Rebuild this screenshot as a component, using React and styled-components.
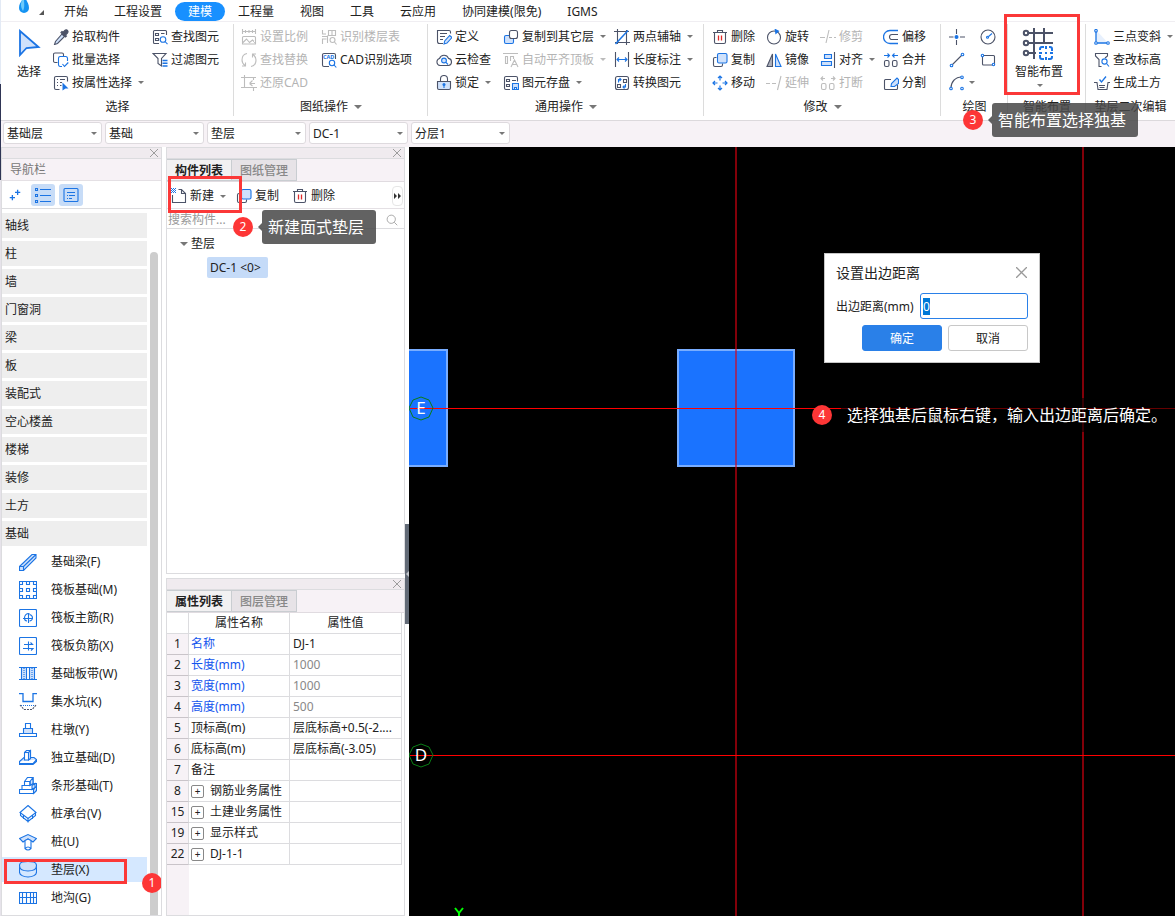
import React, { useEffect, useRef, useState } from 'react'
import styled, { createGlobalStyle } from 'styled-components'

const GlobalStyle = createGlobalStyle`
*{
    box-sizing:border-box;
}
body{
    margin:0;
    font-family:"Noto Sans","Noto Sans CJK SC",sans-serif;
    font-size:12px;
    line-height:16px;
    color:#222;
}
button,input,select{
    font:inherit;
    color:inherit;
    margin:0;
    padding:0;
    border:0;
    background:none;
}
`

/* ---------- icons ---------- */
const Svg = styled.svg`
flex:none;
display:block;
width:${({ $size }) => $size}px;
height:${({ $size }) => $size}px;
fill:none;
stroke:${({ $disabled }) => ($disabled ? '#bdbdbd' : '#4c5368')};
stroke-width:1.1;
.a{
    stroke:${({ $disabled }) => ($disabled ? '#bdbdbd' : '#1b74e4')};
}
.t{
    fill:${({ $disabled }) => ($disabled ? '#f4f4f4' : '#cfe1fb')};
}
.f{
    fill:${({ $disabled }) => ($disabled ? '#bdbdbd' : '#1b74e4')};
    stroke:none;
}
.w{
    fill:#fff;
}
.r{
    stroke:#e02a2a;
}
.d{
    fill:#4c5368;
}
`

const icons = {
    picker: <><path className="t" d="M9 5l2.500 2.500-7 7L1.500 15.500l1-3z" /><path className="d" d="M8 3.500l4.500 4.500 1-1-1-1 2-2c1-1 .5-2.500-.5-3s-1.500-.3-2.200.4l-1.800 1.900-1-.8z" /></>,
    batch: <><path d="M4.500 10.500H2A1.500 1.500 0 0 1 .5 9V2.500A1.500 1.500 0 0 1 2 1h7a1.500 1.500 0 0 1 1.500 1.500V4" /><path className="a w" d="M9 14.500H7A1.800 1.800 0 0 1 5.500 12.700V6.500A1.800 1.800 0 0 1 7 4.500h6a1.800 1.800 0 0 1 1.500 1.800V9" /><path className="a" d="M9.500 12l2 2.500 3.800-4" /></>,
    attrs: <><path d="M6.500 14.500H3a1.500 1.500 0 0 1-1.500-1.500V3A1.500 1.500 0 0 1 3 1.500h10A1.500 1.500 0 0 1 14.500 3v3.500M4 4.500h1M7 4.500h5M4 7.500h1M7 7.500h2M4 10.500h1M7 10.500h1.500" /><path className="f" d="M9.500 7.500l6 6h-3l-3 2z" /></>,
    find: <><path d="M7 14.500H2.500A1 1 0 0 1 1.500 13.500v-11A1 1 0 0 1 2.500 1.500h11a1 1 0 0 1 1 1V6M3.500 4.500h3v2h-3zM3.500 9.500h3v2h-3zM9 4.500h3.500" /><circle className="a" cx="11" cy="10.500" r="2.800" /><path className="a" d="M13 12.500l2.500 2.700" /></>,
    filter: <><path d="M1 1.500h13L9.500 6.500V14L6 11.500v-5z" /><path className="a" strokeWidth="1.500" d="M10.500 8.500h5M10.500 11.200h5M10.500 14h5" /></>,
    scale: <path d="M1.500 2.500h13M1.500 0v5M14.500 0v5M4.500 1v3M8 1v3M11.500 1v3M1.500 15V8.500q0-1 1-1h11q1 0 1 1V15zM2 13.500L5.500 10l3 3.500 3-2.500 3 3" />,
    replace: <path d="M6 1.500C3 2 1 4.500 1 8c0 2.500 1 4 3 5.500M4.500 10.500v3.500H1M10 14.500c3-.5 5-3 5-6.500 0-2.500-1-4-3-5.500M11.500 5.500V2H15" />,
    restore: <path d="M3.500 0v12.500H16M0 2.500h15M12.500 2.500V5M12.500 12.500V16M0 12.500h4M9 8.500h5M8.500 8.500l3-3M8.500 8.500l3 2.500" />,
    floors: <><path d="M1.500 1v4H5M7.500 1.500h7v5h-7zM11 1.500v5M1.500 15v-5h4M6.500 6.500V14M1 7.500h5" /><circle cx="11.500" cy="11" r="2.500" /><path d="M13.500 13l2 2.500" /></>,
    cad: <><path d="M14.500 7V3A1.500 1.500 0 0 0 13 1.500H3A1.500 1.500 0 0 0 1.500 3v10A1.500 1.500 0 0 0 3 14.500h5" /><circle className="a w" cx="11" cy="11" r="2.700" /><path className="a" d="M13 13l2.300 2.500" /></>,
    define: <><path d="M7 14.500H3.500a2 2 0 0 1-2-2v-11H13A1.500 1.500 0 0 1 14.500 3v1.500M4 4.500h7M4 7.500h5M4 10.500h3" /><path className="a t" d="M8 15l.7-3 5-5.500L16 8.500l-5 5.500z" /></>,
    cloud: <><path d="M4 13.500A3.600 3.600 0 0 1 3.500 6.500a4.800 4.800 0 0 1 9-.1A3.600 3.600 0 0 1 12.500 13.500z" /><circle className="a t" cx="8" cy="8.500" r="2.400" /><path className="a" d="M9.700 10.200l2.300 2.300" /></>,
    lock: <><path className="t" d="M1.500 6.500h13v6.500a1.500 1.500 0 0 1-1.500 1.500H3A1.500 1.500 0 0 1 1.500 13z" /><path d="M4.500 6.500V4a3.500 3.500 0 0 1 7 0v2.500" /><circle className="f" cx="8" cy="9.500" r="1.500" /><path className="a" d="M8 10v3" /></>,
    copyTo: <><rect className="t a" x="1.500" y="6.500" width="9" height="8" rx="1.500" /><rect className="w" x="6.500" y="1.500" width="8" height="8" rx="2" /></>,
    alignTop: <path d="M0 1.500h15M2.500 4.500h2v7h-2zM7.500 9V4.500h3V7M8 15l3.500-7 3.500 7M9.300 12.500h4.500" />,
    save: <><path d="M7 14.500H3A1.500 1.500 0 0 1 1.500 13V3A1.500 1.500 0 0 1 3 1.500h10A1.500 1.500 0 0 1 14.500 3v3.500M3.500 4.500h3v2h-3zM3.500 9.500h3v2h-3zM9 5.500h4" /><path className="a t" d="M9.500 8.500h6v6h-6z" /><path className="a w" d="M11.500 12.500h2v2h-2z" /></>,
    axis: <><path d="M3.500 0v15M12.500 1v15M0 2.500h15M1 13.500h15" /><path className="a" strokeWidth="1.500" d="M1.500 15L14 1.500" /></>,
    length: <><path d="M1.500 0v15M14.500 0v15" /><path className="a" d="M3 7.500h10M5 5.500L3 7.500l2 2M11 5.500l2 2-2 2" /></>,
    convert: <><rect x="1.500" y="1.500" width="13" height="13" rx="2" /><path d="M9.500 4.500h3v3h-3zM3.500 9.500h3v3h-3z" /><path className="a" d="M4.500 7.500v-3h2M5.500 3l1.500 1.500L5.500 6M11.500 9v3h-2M10.500 13.500L9 12l1.500-1.500" /></>,
    trash: <><path d="M1 3.500h14M5.500 3V1.500h5V3M2.500 3.500v9.500A1.500 1.500 0 0 0 4 14.500h8a1.500 1.500 0 0 0 1.500-1.500V3.500" /><path className="r" strokeWidth="1.300" d="M6.500 6.500v5M9.500 6.500v5" /></>,
    copy: <><path d="M4 14.500H3A1.500 1.500 0 0 1 1.500 13V7A1.500 1.500 0 0 1 3 5.500h1.500M10.500 11.500V13A1.500 1.500 0 0 1 9 14.500H4" /><rect className="t a" x="5.500" y="1.500" width="9.500" height="9.500" rx="1.500" /></>,
    move: <path className="a" strokeWidth="1.200" d="M8 1v4.500M8 10.500V15M1 8h4.500M10.500 8H15M6 3l2-2 2 2M6 13l2 2 2-2M3 6L1 8l2 2M13 6l2 2-2 2" />,
    rotate: <><circle cx="8" cy="8.500" r="6.500" /><path className="f" d="M8.500 -.5l5 2.500-4 3.500z" /></>,
    mirror: <><path d="M6.500 2v12.500H1z" fill="#aeb2bc" /><path className="a t" d="M9.500 2v12.500H15z" /></>,
    extend: <path d="M0 8.500h4M6 8.500h4M15 1l-3.500 14" />,
    trim: <path d="M0 8.500h5M9 1L6 14M9 8.500h3M14 8.500h2" />,
    align: <><path d="M14.500 0v16" /><path className="a t" d="M4.500 2.500h7v4h-7zM1.500 9.500h10v4h-10z" /></>,
    offset: <><path d="M15 5.500H9a2.500 2.500 0 0 0 0 5h6" /><path className="a" strokeWidth="1.300" d="M15 1.500H7a6.500 6.500 0 0 0 0 13h8" /></>,
    merge: <><rect x="1.500" y="8.500" width="4.500" height="6" rx="1.500" /><rect x="9.500" y="8.500" width="4.500" height="6" rx="1.500" /><path className="a" d="M1 3.500h5M4.500 1.500l2 2-2 2M15 3.500h-5M11.500 1.500l-2 2 2 2" /></>,
    brk: <><rect x="1.500" y="8.500" width="4.500" height="6" rx="1.500" /><rect x="9.500" y="8.500" width="4.500" height="6" rx="1.500" /><path d="M1 3.500h4M3 1.500l-2 2 2 2M15 3.500h-4M13 1.500l2 2-2 2" /></>,
    split: <><path d="M8 4.500H2.500a1 1 0 0 0-1 1v8a1 1 0 0 0 1 1h11a1 1 0 0 0 1-1V10" /><path className="a t" d="M8 11.500l.5-3L14 3l1.500 1.500v4l-4 3z" /></>,
    point: <><path d="M7.500 0v5M7.500 11v5M0 8h4.500M11 8h5" /><circle className="f" cx="7.500" cy="8" r="2" /></>,
    circle: <><circle cx="8" cy="8" r="7" /><path className="a" d="M8 8l4-3.500" /><circle className="a w" cx="7.500" cy="8.300" r="1" /></>,
    line: <><path d="M2.500 13.500l11-11" /><circle className="a w" cx="2.500" cy="13.500" r="1.300" /><circle className="a w" cx="13.500" cy="2.500" r="1.300" /></>,
    rect: <><rect x="2.500" y="3.500" width="12" height="9.500" rx="1" /><circle className="a w" cx="2.500" cy="3.500" r="1.200" /><circle className="a w" cx="13.500" cy="12.500" r="1.200" /></>,
    arc: <><path d="M2 13c0-6 4-11 11-11" /><circle className="a w" cx="2" cy="13.500" r="1.300" /><circle className="a w" cx="13" cy="2.300" r="1.300" /><circle className="a w" cx="13" cy="13.500" r="1.300" /></>,
    slope: <><path className="t" stroke="none" d="M2 1l12 13H2z" fillOpacity=".5" /><path className="a" d="M2 2v12h12" strokeWidth="1.300" /><circle className="a w" cx="2" cy="1.800" r="1.300" /><circle className="a w" cx="2" cy="14" r="1.300" /><circle className="a w" cx="14" cy="14" r="1.300" /></>,
    elev: <><path d="M7.500 14.500H5V7.500L1.500 4V1.500h12V4L11 6" /><circle className="a w" cx="10.500" cy="9.500" r="2.600" /><path className="a" d="M12.500 11.500l2.500 3" /></>,
    earth: <><path d="M0 7.500h3l1 7h9l1-7h2M5 10.500h6M5.500 12.500h5" /><path className="a" strokeWidth="1.300" d="M5.500 4.500l2 2.500L12 1.500" /></>,
    fresh: <><path d="M1.500 7v7.500h13v-9l-4-4H7.500M10.500 1.500v4h4" /><path className="f" d="M0 0h1v1H0zM2 0h1v1H2zM4 0h1v1H4zM1 1h1v1H1zM3 1h1v1H3zM0 2h1v1H0zM2 2h1v1H2zM4 2h1v1H4zM1 3h1v1H1zM3 3h1v1H3zM0 4h1v1H0zM2 4h1v1H2zM4 4h1v1H4z" /></>,
    search: <><circle cx="7" cy="7" r="5.500" stroke="#999" /><path stroke="#999" d="M11 11l4 4" /></>,
    plus: <path className="a" strokeWidth="1.500" d="M11 2v6M8 5h6M5 8v6M2 11h6" />,
    list: <path className="a" d="M.5 1.500h2v2h-2zM.5 7.500h2v2h-2zM.5 13.500h2v2h-2zM5 2.500h11M5 8.500h11M5 14.500h11" />,
    card: <><rect className="a" x="1" y="1.500" width="14" height="13" rx="1" /><path className="a" d="M4 5.500h8M4 8.500h1M6 8.500h6M4 11.500h1M6 11.500h3" /></>,
    beam: <path className="a t" d="M.5 13.500L13 1.500h4V5L4.500 17.500h-4zM.5 13.500h4v4M4.500 13.500L17 1.500" />,
    raft: <path className="a" d="M.5.500h17v17H.5zM3.500.500v3h-3M7.500.500v3h3v-3M14.500.500v3h3M.5 7.500h3v3h-3M7.500 7.500h3v3h-3zM17.500 7.500h-3v3h3M.5 14.500h3v3M7.500 17.500v-3h3v3M14.500 17.500v-3h3" />,
    mainBar: <><rect className="a" x=".5" y=".5" width="17" height="17" rx="1" /><path className="a" d="M4 9.500h10M9.500 5v9M10.500 4.500c-3-.5-5 2-5 4.500s1 3 2.500 3M10.500 5.500c2 .5 3 2 3 3.500s-1.500 3-3 3" /></>,
    negBar: <><rect className="a" x=".5" y=".5" width="17" height="17" rx="1" /><path className="a" d="M5 7.500h8.500l-2-2M4 11.500h10l-2 2M9.500 4.500v9" /></>,
    strip: <><path className="t" stroke="none" d="M3 3h4v12H3zM11 3h4v12h-4z" /><path className="a" d="M0 2.500h18M0 14.500h18M2.500 3v11M7.500 3v11M10.500 3v11M15.500 3v11" /><path className="a" strokeDasharray="1 1" d="M5 3v11M13 3v11" /></>,
    pit: <><path className="a" strokeWidth="1.300" d="M0 .5h4v8h10v-8h4" /><path className="a" strokeDasharray="1 1" d="M2 12.500h14" /><path d="M1 12l4 4.500h8l4-4.500" strokeDasharray="2 1" /></>,
    pier: <><path className="a" d="M6.500 2.500h5v5h-5zM.5 12.500h17v3H.5z" /><path className="a t" d="M4.500 7.500h9v5h-9z" /></>,
    single: <><path className="a t" d="M.5 12.500L5 8.500h10l2.500 2-3.500 4H.5zM.5 12.500v3h13.500l3.500-3v-2M14 14.500v1" /><path className="a w" d="M5.500 3.500l2-2h4v8l-2 1.500h-4z" /><path className="a t" d="M9.500 3.500l2-2v8l-2 1.500z" /><path className="a" d="M5.500 3.500h4" /></>,
    stripBase: <><path className="a w" d="M5.500 4.500l3-4h5.500v6h3.500v7l-3 3H.5v-4h2.500v-4h2.500z" /><path className="a t" d="M11 4.500l3-4v6l-3 2zM13 8.500l3-2v4l-3 2zM14.500 12.500l3-3v4l-3 3z" /><path className="a" d="M5.500 4.500H11v4H3M3 12.500h11.500" /></>,
    cap: <><path className="a w" d="M9 .5l8 7-8 6-8-6z" /><path className="a" d="M1.500 7.500v3l7.500 6 7.500-6v-3M9 13.500v4M4.500 10v4M13.500 10v4" /></>,
    pile: <><path className="a t" d="M.5 5.500l8.500-4 8.500 4-3.500 3.500L9 6 4 9z" /><path className="a w" d="M6 7.500v8q3 3 6 0v-8L9 6zM6 15.500q3-3 6 0" /></>,
    cushion: <><path className="a" d="M.5 5.500v5.500c0 3 4 5 8.500 5s8.500-2 8.500-5V5.500" /><path className="a t" d="M.5 4.500c0 4 4 5.500 8.500 5.500s8.500-1.500 8.500-5.500S13 .5 9 .5.5.5.5 4.500z" /></>,
    trench: <path className="a" d="M.5 3.500h17v11H.5zM.5 8.500h17M3.500 4v10M7.500 4v10M11.500 4v10M14.500 4v10" />,
}

const Icon = ({ name, size = 16, disabled }) => (
    <Svg $size={size} $disabled={disabled} viewBox={size === 18 ? '0 0 18 18' : '0 0 16 16'} aria-hidden="true">
        {icons[name]}
        {name === 'cad' && <text x="2" y="6.500" fontSize="5.500" fontWeight="700" fill="#1b74e4" stroke="none">CAD</text>}
    </Svg>
)

const Caret = styled.span`
flex:none;
width:0;
height:0;
border:${({ $big }) => ($big ? 4 : 3)}px solid transparent;
border-top-color:${({ $light }) => ($light ? '#bbb' : '#777')};
border-bottom:0;
margin-left:${({ $gap }) => $gap || 5}px;
`

const CloseIcon = ({ size = 8 }) => (
    <svg width={size} height={size} viewBox="0 0 10 10" stroke="#999" strokeWidth="1.200" aria-hidden="true">
        <path d="M0 0l10 10M10 0L0 10" />
    </svg>
)

/* ---------- shell ---------- */
const Shell = styled.div`
height:100vh;
display:flex;
flex-direction:column;
overflow:hidden;
padding-left:1px;
background:linear-gradient(#e3eaf5 0 84px,#2f3555 84px 180px,#e6e3ea 180px) 0 0/1px 100% no-repeat #fff;
`
const TabBar = styled.nav`
flex:none;
display:flex;
align-items:flex-end;
height:22px;
padding-left:16px;
border-bottom:1px solid #f0eef2;
background:#fff;
`
const Logo = styled.button`
display:flex;
align-items:flex-end;
width:34px;
height:22px;
gap:8px;
`
const Tab = styled.button`
height:19px;
padding:1px 13px 0;
border-radius:10px;
white-space:nowrap;
line-height:18px;
background:${({ $active }) => ($active ? '#1890ff' : 'transparent')};
color:${({ $active }) => ($active ? '#fff' : '#222')};
`
const Ribbon = styled.div`
flex:none;
display:flex;
height:98px;
background:#fff;
`
const Group = styled.section`
position:relative;
flex:${({ $width }) => ($width ? `0 0 ${$width}px` : '1 0 auto')};
display:flex;
flex-direction:column;
padding-top:3px;
&:not(:last-child)::after{
    content:"";
    position:absolute;
    right:0;
    top:2px;
    bottom:4px;
    width:1px;
    background:#dcdcdc;
}
`
const GroupBody = styled.div`
display:flex;
height:69px;
padding-left:${({ $pad }) => $pad || 0}px;
`
const GroupName = styled.div`
display:flex;
justify-content:center;
align-items:center;
height:26px;
white-space:nowrap;
`
const ToolGrid = styled.div`
display:grid;
grid-template-columns:${({ $cols }) => $cols};
grid-template-rows:repeat(3,23px);
grid-auto-flow:column;
`
const Tool = styled.button`
display:flex;
align-items:center;
gap:3px;
white-space:nowrap;
color:${({ disabled }) => (disabled ? '#b4b4b4' : '#222')};
`
const BigTool = styled.button`
display:flex;
flex-direction:column;
align-items:center;
width:${({ $width }) => $width}px;
padding:${({ $pad }) => $pad};
gap:${({ $gap }) => $gap}px;
`

/* ---------- selector bar ---------- */
const SelectorBar = styled.div`
flex:none;
display:flex;
gap:3px;
height:27px;
padding:1px 2px;
background:#f7f2f6;
border-top:1px solid #dcd9dc;
`
const SelectBox = styled.label`
position:relative;
width:99px;
height:22px;
select{
    width:100%;
    height:22px;
    padding:1px 3px 0;
    appearance:none;
    background:#fff;
    border:1px solid #dedade;
    border-radius:3px;
}
${Caret}{
    position:absolute;
    right:5px;
    top:10px;
    pointer-events:none;
}
`

/* ---------- side panels ---------- */
const Workspace = styled.main`
flex:1;
min-height:0;
display:flex;
`
const Panel = styled.section`
display:flex;
flex-direction:column;
min-height:0;
flex:${({ $basis }) => ($basis ? `0 0 ${$basis}px` : '1 1 0')};
border:1px solid #dcdcdf;
border-top:0;
background:#fff;
`
const PanelGrip = styled.div`
flex:none;
display:flex;
justify-content:flex-end;
height:12px;
padding-right:3px;
background:#f0ebef;
border-top:1px solid #dcdcdf;
border-bottom:1px solid #dcdcdf;
button{
    display:flex;
    align-items:center;
}
`
const NavTitle = styled.h2`
flex:none;
margin:0;
height:22px;
padding-left:8px;
font-size:12px;
font-weight:400;
line-height:22px;
color:#777;
background:#f7f2f6;
border-bottom:1px solid #e4e0e4;
`
const NavTools = styled.div`
flex:none;
display:flex;
align-items:center;
gap:4px;
height:28px;
padding-left:1px;
border-bottom:1px solid #dcdcdf;
`
const NavTool = styled.button`
display:flex;
align-items:center;
justify-content:center;
width:24px;
height:22px;
border-radius:3px;
background:${({ $on }) => ($on ? '#c7dcf7' : 'transparent')};
`
const NavBody = styled.div`
flex:1;
min-height:0;
display:flex;
gap:3px;
overflow:hidden;
padding:4px 3px 0 0;
`
const NavList = styled.ul`
flex:1;
margin:0;
padding:0;
list-style:none;
`
const NavRow = styled.li`
position:relative;
margin-bottom:3px;
button{
    display:flex;
    align-items:center;
    gap:14px;
    width:100%;
    height:25px;
    padding-left:${({ $child }) => ($child ? 17 : 3)}px;
    text-align:left;
    background:${({ $child, $on }) => ($on ? '#d5e8ff' : $child ? 'transparent' : '#eee')};
}
`
const Thumb = styled.div`
width:8px;
margin-top:39px;
border-radius:4px 4px 0 0;
background:#cdcdcd;
`
const Docks = styled.div`
flex:0 0 239px;
display:flex;
flex-direction:column;
gap:4px;
margin-left:4px;
`
const DockTabs = styled.div`
flex:none;
display:flex;
height:23px;
background:#f7f2f6;
border-bottom:1px solid #e0dbe0;
`
const DockTab = styled.button`
width:${({ $active }) => ($active ? 64 : 66)}px;
padding-top:2px;
border:1px solid #c9cdd1;
border-left-width:${({ $active }) => ($active ? 0 : 1)}px;
border-right-width:${({ $active }) => ($active ? 0 : 1)}px;
background:${({ $active }) => ($active ? '#f2f1f2' : '#e7e3e7')};
color:${({ $active }) => ($active ? '#222' : '#888')};
font-weight:${({ $active }) => ($active ? 700 : 500)};
`
const DockTools = styled.div`
flex:none;
display:flex;
align-items:center;
height:27px;
padding:2px 0 0 4px;
border-bottom:1px solid #e4e0e4;
`
const DockTool = styled(Tool)`
position:relative;
height:24px;
margin-right:${({ $space }) => $space || 0}px;
`
const MoreButton = styled.button`
width:11px;
height:20px;
margin:0 1px 0 auto;
border:1px solid #e6e6e6;
border-radius:4px;
display:flex;
align-items:center;
justify-content:center;
`
const SearchRow = styled.label`
flex:none;
display:flex;
align-items:center;
height:20px;
padding:2px 6px 0 1px;
border-bottom:1px solid #dcdcdf;
input{
    flex:1;
    min-width:0;
    outline:0;
}
input::placeholder{
    color:#999;
    opacity:1;
}
`
const Tree = styled.div`
flex:1;
padding:4px 0 0 12px;
`
const TreeNode = styled.button`
display:flex;
align-items:center;
gap:3px;
height:22px;
margin-bottom:2px;
`
const TreeLeaf = styled.button`
height:21px;
margin-left:28px;
padding:1px 7px 0 3px;
border-radius:2px;
background:#c5dbf8;
white-space:pre;
`
const PropsArea = styled.div`
flex:1;
overflow:hidden;
background:linear-gradient(#f7f2f6,#f7f2f6) 0 0/22px 100% no-repeat;
`
const PropsTable = styled.table`
width:calc(100% - 2px);
table-layout:fixed;
border-collapse:separate;
border-spacing:0;
background:#fff;
th,td{
    height:21px;
    padding:0 3px;
    border-right:1px solid #dcdcdf;
    border-bottom:1px solid #dcdcdf;
    font-weight:400;
    text-align:left;
    white-space:nowrap;
    overflow:hidden;
    text-overflow:ellipsis;
}
td:nth-child(2){
    padding:0 2px;
}
thead th{
    text-align:center;
}
tbody th{
    padding:0;
    text-align:center;
    background:#f7f2f6;
    border-bottom-color:#c9c4c9;
}
`
const Key = styled.span`
display:flex;
align-items:center;
gap:6px;
color:${({ $link }) => ($link ? '#1355ee' : '#222')};
`
const Value = styled.span`
color:${({ $muted }) => ($muted ? '#888' : '#222')};
`
const Expander = styled.button`
position:relative;
width:13px;
height:13px;
border:1px solid #888;
border-radius:2px;
font-size:10px;
line-height:10px;
`
const Splitter = styled.div`
flex:0 0 4px;
button{
    display:flex;
    align-items:center;
    width:4px;
    height:100px;
    margin-top:377px;
    background:#626a76;
}
`

/* ---------- drawing area ---------- */
const Canvas = styled.div`
position:relative;
flex:1;
min-width:0;
overflow:hidden;
background:#000;
&>svg{
    display:block;
    width:100%;
    height:100%;
}
`
const Dialog = styled.form`
position:absolute;
left:415px;
top:106px;
width:216px;
padding:9px 11px 11px;
background:#fff;
border:1px solid #c6c6c6;
header{
    display:flex;
    justify-content:space-between;
    align-items:center;
    height:20px;
    margin-bottom:10px;
    padding-right:1px;
    font-size:14px;
}
`
const Field = styled.label`
display:flex;
justify-content:space-between;
align-items:center;
white-space:nowrap;
span{
    padding-top:2px;
}
input{
    width:108px;
    height:26px;
    padding:0 2px;
    border:1px solid #2a80e8;
    border-radius:3px;
    outline:0;
}
input::selection{
    background:#0078d7;
    color:#fff;
}
`
const Actions = styled.div`
display:flex;
justify-content:flex-end;
gap:6px;
margin-top:6px;
`
const ActionButton = styled.button`
width:80px;
height:26px;
padding-top:1px;
border-radius:3px;
border:1px solid ${({ $primary }) => ($primary ? '#2a80e8' : '#c8c8c8')};
background:${({ $primary }) => ($primary ? '#2a80e8' : '#fff')};
color:${({ $primary }) => ($primary ? '#fff' : '#222')};
`

/* ---------- guide marks over the screen ---------- */
const Frame = styled.span`
position:absolute;
z-index:3;
top:${({ $top }) => $top}px;
left:${({ $left }) => $left}px;
width:${({ $w }) => $w}px;
height:${({ $h }) => $h}px;
border:3px solid #fb3838;
pointer-events:none;
`
const Step = styled.span`
position:absolute;
z-index:4;
top:${({ $top }) => $top}px;
left:${({ $left }) => $left}px;
display:flex;
align-items:center;
white-space:nowrap;
color:#fff;
b{
    width:20px;
    height:20px;
    border-radius:50%;
    background:#fd3636;
    font-weight:400;
    line-height:20px;
    text-align:center;
}
`
const Tip = styled.span`
position:relative;
margin-left:9px;
padding:1px 12px 0 6px;
border-radius:3px;
background:rgba(72,72,72,.86);
font-size:16px;
line-height:33px;
&::before{
    content:"";
    position:absolute;
    left:-4px;
    top:13px;
    border:4px solid transparent;
    border-left:0;
    border-right-color:rgba(72,72,72,.86);
}
`
const PlainTip = styled.span`
margin-left:9px;
padding:1px 20px 0 6px;
background:rgba(0,0,0,.6);
font-size:16px;
line-height:33px;
`

const menu = ['开始', '工程设置', '建模', '工程量', '视图', '工具', '云应用', '协同建模(限免)', 'IGMS']

// [icon, label, flags] - "v" adds a drop-down arrow, "x" disables
const selectTools = [['picker', '拾取构件'], ['batch', '批量选择'], ['attrs', '按属性选择', 'v'], ['find', '查找图元'], ['filter', '过滤图元']]
const sheetTools = [['scale', '设置比例', 'x'], ['replace', '查找替换', 'x'], ['restore', '还原CAD', 'x'], ['floors', '识别楼层表', 'x'], ['cad', 'CAD识别选项']]
const commonTools = [
    ['define', '定义'], ['cloud', '云检查'], ['lock', '锁定', 'v'],
    ['copyTo', '复制到其它层', 'v'], ['alignTop', '自动平齐顶板', 'vx'], ['save', '图元存盘', 'v'],
    ['axis', '两点辅轴', 'v'], ['length', '长度标注', 'v'], ['convert', '转换图元'],
]
const modifyTools = [
    ['trash', '删除'], ['copy', '复制'], ['move', '移动'],
    ['rotate', '旋转'], ['mirror', '镜像'], ['extend', '延伸', 'x'],
    ['trim', '修剪', 'x'], ['align', '对齐', 'v'], ['brk', '打断', 'x'],
    ['offset', '偏移'], ['merge', '合并'], ['split', '分割'],
]
const drawTools = [['point', '', '', '点'], ['line', '', '', '直线'], ['arc', '', 'v', '弧'], ['circle', '', '', '圆'], ['rect', '', '', '矩形']]
const cushionTools = [['slope', '三点变斜', 'v'], ['elev', '查改标高'], ['earth', '生成土方']]

const selectors = [['楼层', '基础层'], ['分类', '基础'], ['构件类型', '垫层'], ['构件', 'DC-1'], ['分层', '分层1']]
const categories = ['轴线', '柱', '墙', '门窗洞', '梁', '板', '装配式', '空心楼盖', '楼梯', '装修', '土方', '基础']
const foundations = [
    ['beam', '基础梁(F)'], ['raft', '筏板基础(M)'], ['mainBar', '筏板主筋(R)'], ['negBar', '筏板负筋(X)'],
    ['strip', '基础板带(W)'], ['pit', '集水坑(K)'], ['pier', '柱墩(Y)'], ['single', '独立基础(D)'],
    ['stripBase', '条形基础(T)'], ['cap', '桩承台(V)'], ['pile', '桩(U)'], ['cushion', '垫层(X)'], ['trench', '地沟(G)'],
]
const properties = [
    { no: 1, key: '名称', value: 'DJ-1', link: true },
    { no: 2, key: '长度(mm)', value: '1000', link: true, muted: true },
    { no: 3, key: '宽度(mm)', value: '1000', link: true, muted: true },
    { no: 4, key: '高度(mm)', value: '500', link: true, muted: true },
    { no: 5, key: '顶标高(m)', value: '层底标高+0.5(-2....' },
    { no: 6, key: '底标高(m)', value: '层底标高(-3.05)' },
    { no: 7, key: '备注' },
    { no: 8, key: '钢筋业务属性', group: true },
    { no: 15, key: '土建业务属性', group: true },
    { no: 19, key: '显示样式', group: true },
    { no: 22, key: 'DJ-1-1', group: true },
]

const Tools = ({ items, cols }) => (
    <ToolGrid $cols={cols}>
        {items.map(([icon, label, flags = '', title]) => {
            const disabled = flags.includes('x')
            return (
                <Tool key={icon} type="button" disabled={disabled} aria-label={title}>
                    <Icon name={icon} disabled={disabled} />
                    {label}
                    {flags.includes('v') && <Caret $light={disabled} $gap={label ? 3 : 1} />}
                </Tool>
            )
        })}
    </ToolGrid>
)

const SmartIcon = () => (
    <svg width="34" height="32" viewBox="0 0 34 32" fill="none" stroke="#4c5368" strokeWidth="2" aria-hidden="true">
        <path d="M6 5h25M6 15h25M6 25h8M12 0v31M22 0v15" />
        <circle cx="4" cy="5" r="2.200" fill="#fff" />
        <circle cx="4" cy="15" r="2.200" fill="#fff" />
        <circle cx="4" cy="25" r="2.200" fill="#fff" />
        <rect x="16" y="17" width="16" height="15" fill="#fff" stroke="none" />
        <path stroke="#1b74e4" d="M18 22v-1a2 2 0 0 1 2-2h2M27 19h1a2 2 0 0 1 2 2v2M30 28v1a2 2 0 0 1-2 2h-2M22 31h-2a2 2 0 0 1-2-2v-2M23 25h2M24 18v3M24 29v3M17 25h3M28 25h3" />
    </svg>
)

const Grip = ({ label }) => (
    <PanelGrip>
        <button type="button" aria-label={label}><CloseIcon /></button>
    </PanelGrip>
)

const OffsetDialog = () => {
    const [distance, setDistance] = useState('0')
    const inputRef = useRef(null)
    useEffect(() => {
        inputRef.current.focus()
        inputRef.current.select()
    }, [])
    return (
        <Dialog onSubmit={(e) => e.preventDefault()}>
            <header>
                设置出边距离
                <button type="button" aria-label="关闭"><CloseIcon size={11} /></button>
            </header>
            <Field>
                <span>出边距离(mm)</span>
                <input ref={inputRef} value={distance} onChange={(e) => setDistance(e.target.value)} />
            </Field>
            <Actions>
                <ActionButton type="submit" $primary>确定</ActionButton>
                <ActionButton type="button">取消</ActionButton>
            </Actions>
        </Dialog>
    )
}

const Drawing = () => (
    <svg aria-hidden="true">
        <g fill="#1a73ff" stroke="#78adff" strokeWidth="2">
            <rect x="-80" y="203" width="118" height="116" />
            <rect x="269" y="203" width="116" height="116" />
        </g>
        <g fill="#e00010" fillOpacity=".58">
            <rect x="326" y="0" width="2" height="100%" />
            <rect x="673" y="0" width="2" height="100%" />
        </g>
        <g fill="#f00">
            <rect x="1" y="261" width="100%" height="1" />
            <rect x="1" y="608" width="100%" height="1" />
        </g>
        <g fill="none" stroke="#0a7d16">
            <path d="M12 250l8 3 4 8-4 9-8 3-8-3-4-9 4-8z" />
            <path d="M12 597l8 3 4 8-4 9-8 3-8-3-4-9 4-8z" />
        </g>
        <g fill="#fff" fontSize="17" textAnchor="middle">
            <text x="12" y="267">E</text>
            <text x="12" y="614">D</text>
        </g>
        <path d="M46 761l4 5 4-5M50 766v6" fill="none" stroke="#0f0" strokeWidth="2" />
    </svg>
)

export default function App() {
    const [tab, setTab] = useState('建模')
    const [current, setCurrent] = useState('cushion')
    return (
        <Shell>
            <GlobalStyle />
            <TabBar>
                <Logo type="button" aria-label="主菜单">
                    <svg width="14" height="22" viewBox="0 0 14 22" aria-hidden="true">
                        <path d="M6 0c-2 3-4 5-4 9a5 5 0 0 0 10 0c0-4-2-6-3-9z" fill="#1593f2" />
                        <path d="M5 0c-1 5-2 7 1 12 2-4 1-8 1-12z" fill="#6ccafb" />
                    </svg>
                    <svg width="5" height="12" viewBox="0 0 5 12" aria-hidden="true"><path d="M5 1v5H0z" fill="#555" /></svg>
                </Logo>
                {menu.map((name) => (
                    <Tab key={name} type="button" $active={name === tab} onClick={() => setTab(name)}>{name}</Tab>
                ))}
            </TabBar>

            <Ribbon>
                <Group $width={233}>
                    <GroupBody>
                        <BigTool type="button" $width={52} $pad="4px 0 0 4px" $gap={7}>
                            <svg width="24" height="28" viewBox="0 0 24 28" aria-hidden="true">
                                <path d="M3 2v24l6.500-7 12-1z" fill="#cfe1fb" stroke="#1b74e4" strokeWidth="1.800" />
                            </svg>
                            选择
                        </BigTool>
                        <Tools items={selectTools} cols="99px auto" />
                    </GroupBody>
                    <GroupName>选择</GroupName>
                </Group>
                <Group $width={194}>
                    <GroupBody $pad={7}><Tools items={sheetTools} cols="80px auto" /></GroupBody>
                    <GroupName>图纸操作<Caret $big $gap={6} /></GroupName>
                </Group>
                <Group $width={276}>
                    <GroupBody $pad={8}><Tools items={commonTools} cols="67px 111px auto" /></GroupBody>
                    <GroupName>通用操作<Caret $big $gap={6} /></GroupName>
                </Group>
                <Group $width={237}>
                    <GroupBody $pad={8}><Tools items={modifyTools} cols="54px 54px 63px auto" /></GroupBody>
                    <GroupName>修改<Caret $big $gap={6} /></GroupName>
                </Group>
                <Group $width={67}>
                    <GroupBody $pad={8}><Tools items={drawTools} cols="31px auto" /></GroupBody>
                    <GroupName>绘图</GroupName>
                </Group>
                <Group $width={78}>
                    <GroupBody>
                        <BigTool type="button" $width={62} $pad="3px 0 0" $gap={4}>
                            <SmartIcon />
                            智能布置
                            <Caret $gap={1} />
                        </BigTool>
                    </GroupBody>
                    <GroupName>智能布置</GroupName>
                    <Frame $top={-8} $left={-4} $w={76} $h={81} />
                    <Step $top={81} $left={-45}>
                        <b>3</b>
                        <Tip>智能布置选择独基</Tip>
                    </Step>
                </Group>
                <Group>
                    <GroupBody $pad={8}><Tools items={cushionTools} cols="auto" /></GroupBody>
                    <GroupName>垫层二次编辑</GroupName>
                </Group>
            </Ribbon>

            <SelectorBar>
                {selectors.map(([label, value]) => (
                    <SelectBox key={label}>
                        <select aria-label={label} defaultValue={value}>
                            <option>{value}</option>
                        </select>
                        <Caret />
                    </SelectBox>
                ))}
            </SelectorBar>

            <Workspace>
                <Panel $basis={161}>
                    <Grip label="关闭导航栏" />
                    <NavTitle>导航栏</NavTitle>
                    <NavTools>
                        <NavTool type="button" aria-label="添加"><Icon name="plus" size={14} /></NavTool>
                        <NavTool type="button" aria-label="列表" $on><Icon name="list" /></NavTool>
                        <NavTool type="button" aria-label="卡片" $on><Icon name="card" /></NavTool>
                    </NavTools>
                    <NavBody>
                        <NavList>
                            {categories.map((name) => (
                                <NavRow key={name}><button type="button">{name}</button></NavRow>
                            ))}
                            {foundations.map(([icon, name]) => (
                                <NavRow key={icon} $child $on={icon === current}>
                                    <button type="button" onClick={() => setCurrent(icon)}>
                                        <Icon name={icon} size={18} />
                                        {name}
                                    </button>
                                    {icon === 'cushion' && (
                                        <>
                                            <Frame $top={2} $left={2} $w={123} $h={25} />
                                            <Step $top={16} $left={140}><b>1</b></Step>
                                        </>
                                    )}
                                </NavRow>
                            ))}
                        </NavList>
                        <Thumb />
                    </NavBody>
                </Panel>

                <Docks>
                    <Panel $basis={427}>
                        <Grip label="关闭构件列表" />
                        <DockTabs>
                            <DockTab type="button" $active>构件列表</DockTab>
                            <DockTab type="button">图纸管理</DockTab>
                        </DockTabs>
                        <DockTools>
                            <DockTool type="button" $space={10}>
                                <Icon name="fresh" />
                                新建
                                <Caret $gap={3} />
                                <Frame $top={-8} $left={-3} $w={74} $h={37} />
                                <Step $top={26} $left={62}>
                                    <b>2</b>
                                    <Tip>新建面式垫层</Tip>
                                </Step>
                            </DockTool>
                            <DockTool type="button" $space={13}><Icon name="copy" />复制</DockTool>
                            <DockTool type="button"><Icon name="trash" />删除</DockTool>
                            <MoreButton type="button" aria-label="更多">
                                <svg width="7" height="6" viewBox="0 0 7 6" aria-hidden="true"><path d="M0 0l3 3-3 3zM4 0l3 3-3 3z" fill="#333" /></svg>
                            </MoreButton>
                        </DockTools>
                        <SearchRow>
                            <input type="text" placeholder="搜索构件..." aria-label="搜索构件" />
                            <Icon name="search" size={12} />
                        </SearchRow>
                        <Tree>
                            <TreeNode type="button"><Caret $big $gap={1} />垫层</TreeNode>
                            <TreeLeaf type="button">{'DC-1 <0>'}</TreeLeaf>
                        </Tree>
                    </Panel>
                    <Panel>
                        <Grip label="关闭属性列表" />
                        <DockTabs>
                            <DockTab type="button" $active>属性列表</DockTab>
                            <DockTab type="button">图层管理</DockTab>
                        </DockTabs>
                        <PropsArea>
                            <PropsTable>
                                <colgroup>
                                    <col width="22" />
                                    <col width="101" />
                                    <col />
                                </colgroup>
                                <thead>
                                    <tr><th /><th>属性名称</th><th>属性值</th></tr>
                                </thead>
                                <tbody>
                                    {properties.map((row) => (
                                        <tr key={row.no}>
                                            <th>{row.no}</th>
                                            <td>
                                                <Key $link={row.link}>
                                                    {row.group && <Expander type="button" aria-label={'展开' + row.key}>+</Expander>}
                                                    {row.key}
                                                </Key>
                                            </td>
                                            <td><Value $muted={row.muted}>{row.value}</Value></td>
                                        </tr>
                                    ))}
                                </tbody>
                            </PropsTable>
                        </PropsArea>
                    </Panel>
                </Docks>

                <Splitter>
                    <button type="button" aria-label="折叠面板">
                        <svg width="4" height="6" viewBox="0 0 4 6" aria-hidden="true"><path d="M4 0v6L1 3z" fill="#c3c7cd" /></svg>
                    </button>
                </Splitter>

                <Canvas>
                    <Drawing />
                    <OffsetDialog />
                    <Step $top={251} $left={403}>
                        <b>4</b>
                        <PlainTip>选择独基后鼠标右键，输入出边距离后确定。</PlainTip>
                    </Step>
                </Canvas>
            </Workspace>
        </Shell>
    )
}
